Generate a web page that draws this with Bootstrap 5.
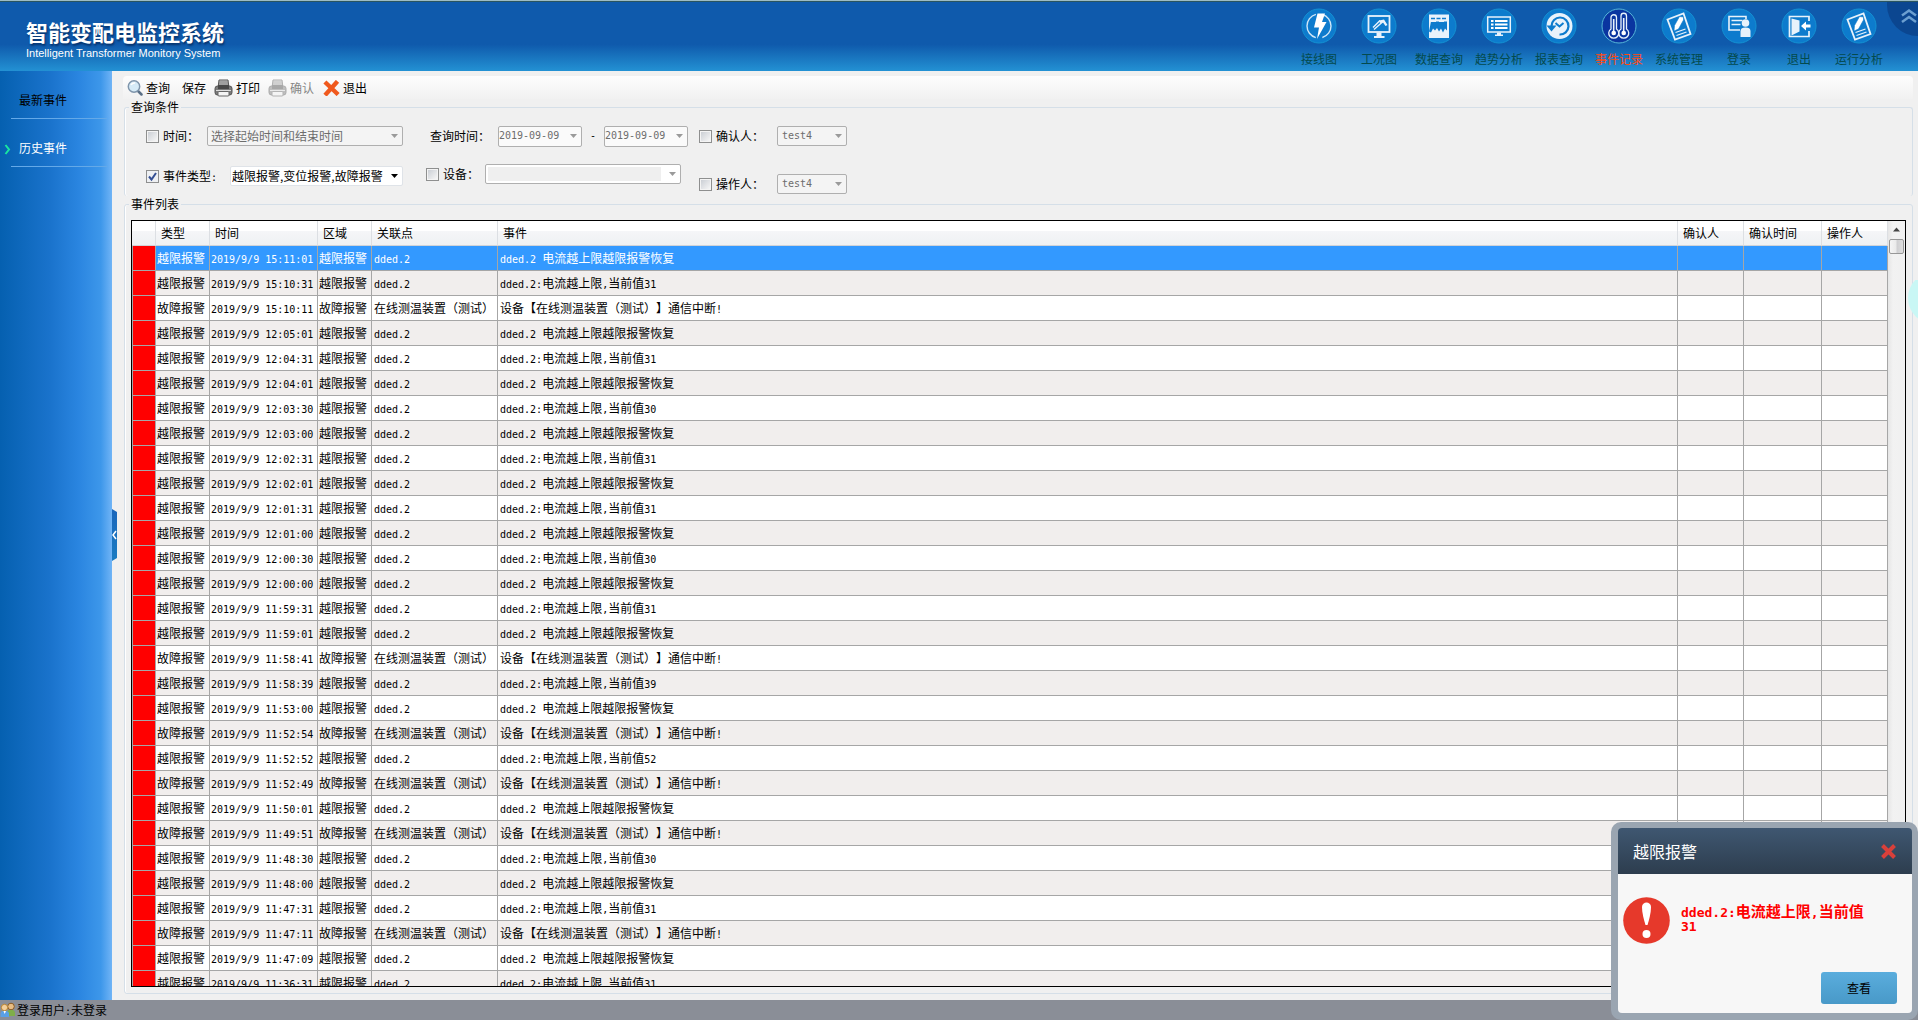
<!DOCTYPE html>
<html lang="zh-CN">
<head>
<meta charset="utf-8">
<meta name="viewport" content="width=device-width, initial-scale=1">
<title>智能变配电监控系统</title>
<link href="https://cdn.jsdelivr.net/npm/bootstrap@5.3.0/dist/css/bootstrap.min.css" rel="stylesheet">
<style>
  body { font-family: "Noto Sans CJK SC", sans-serif; font-size: 12px; line-height: 16px; color: #000; background: #f0f0f0; text-spacing-trim: space-all; font-feature-settings: "chws" 0, "halt" 0; }
  .asc { font-family: "DejaVu Sans Mono", monospace; font-size: 10px; line-height: 10px; white-space: pre; }

  /* header */
  .app-head { height: 71px; border-top: 1px solid #9dbcc4; background: linear-gradient(#0f5aac 0, #0f5aac 62%, #2391d3 100%); box-shadow: inset 0 1px 0 #2a5560; }
  .brand-title { font-size: 22px; line-height: 28px; font-weight: 700; color: #fff; text-shadow: 1px 2px 2px #06336c; }
  .brand-sub { font-family: "Liberation Sans", sans-serif; font-size: 11px; line-height: 16px; color: #fff; }
  .brand-box { padding: 16px 0 0 26px; }
  .head-nav { padding: 7px 29px 0 0; }
  .head-nav a { width: 60px; color: #044a4d; text-decoration: none; white-space: nowrap; }
  .head-nav a.on { color: #ff4a10; }
  .head-nav svg { width: 36px; height: 36px; margin-bottom: 7px; }
  .fold-btn { top: 1px; right: 0; width: 31px; height: 34px; border: 0; padding: 0; background: #0b4690; border-radius: 0 0 0 31px; }

  /* side bar */
  .side { width: 112px; background: linear-gradient(90deg, #0560b0 0, #1a73cc 45%, #2a85e0 70%, #3d97ea 90%, #70b4f6 100%); padding: 6px 5px 0 11px; }
  .side a { height: 48px; padding: 10px 0 0 8px; color: #000; text-decoration: none; border-bottom: 1px solid #64a9e8; }
  .side a:first-child { height: 42px; padding-top: 4px; }
  .side a.on { color: #fff; }
  .side a.on svg { left: -7px; top: 25px; }
  .side-tab { left: 112px; top: 438px; width: 5px; height: 52px; border: 0; padding: 0; background: linear-gradient(#1a66bb, #1b7cc2); clip-path: polygon(0 0, 100% 3px, 100% 49px, 0 100%); }

  /* tool bar */
  .work { padding: 5px 5px 6px 11px; }
  .tool-bar { height: 23px; background: linear-gradient(#fdfdfd, #f1f1f1); border-radius: 4px 4px 0 0; padding: 0 0 0 4px; }
  .tool-bar button { border: 0; background: none; padding: 0; color: #000; display: flex; align-items: center; gap: 3px; }
  .tool-bar button:disabled { color: #868686; }

  /* group boxes */
  .grp { border: 1px solid #d5dfe8; border-radius: 3px; margin-left: 1px; box-shadow: inset 1px 0 0 #fff; min-width: 0; }
  .grp legend { float: none; width: auto; margin: 0 0 0 -2px; padding: 0 2px; font-size: 12px; line-height: 16px; }
  .cond { height: 97px; border-bottom: 0; padding: 0 0 0 6px; }
  .blk-a { width: 257px; margin: 11px 23px 0 15px; }
  .blk-b { width: 262px; margin: 11px 11px 0 0; }
  .blk-c { width: 148px; margin-top: 11px; }
  .fline { height: 20px; display: flex; align-items: center; white-space: nowrap; }
  .fline + .fline { margin-top: 20px; }
  .blk-b .fline + .fline { margin-top: 18px; }
  .blk-c .fline + .fline { margin-top: 28px; }
  .dev-label { width: 42px; }
  .chk { appearance: none; width: 13px; height: 13px; margin: 0 4px 0 0; border: 1px solid #8e8f8f; background: linear-gradient(135deg, #cbcfd5, #f6f6f6) content-box, #f4f4f4; padding: 1px; flex: none; }
  .chk:checked { background: url("data:image/svg+xml,%3Csvg xmlns='http://www.w3.org/2000/svg' viewBox='0 0 11 11'%3E%3Cpath d='M2 5.5 4.5 8.5 9 2' fill='none' stroke='%23344f93' stroke-width='2'/%3E%3C/svg%3E"), #eef0f3; }
  .sel { height: 20px; min-height: 0; padding: 0 16px 0 3px; font-family: "Noto Sans CJK SC", sans-serif; font-size: 12px; line-height: 16px; color: #000; border: 1px solid #dfe3e8; border-radius: 2px; background: #fff url("data:image/svg+xml,%3Csvg xmlns='http://www.w3.org/2000/svg' width='8' height='4'%3E%3Cpath d='M0 0h8L4 4z' fill='%23000'/%3E%3C/svg%3E") no-repeat right 4px center; background-size: 7px 4px; }
  .sel:disabled { color: #6d6d6d; border-color: #afafaf; opacity: 1; background-color: #f4f4f4; background-image: url("data:image/svg+xml,%3Csvg xmlns='http://www.w3.org/2000/svg' width='8' height='4'%3E%3Cpath d='M0 0h8L4 4z' fill='%239a9a9a'/%3E%3C/svg%3E"); }
  .sel.date-sel { width: 84px; height: 21px; padding-left: 0; background-color: #fafafa; }
  .sel.mono { font-family: "DejaVu Sans Mono", monospace; font-size: 10px; }
  .sel.w-time { width: 196px; }
  .sel.w-type { width: 173px; padding-left: 1px; padding-right: 18px; }
  .sel.w-dev { width: 196px; }
  .sel.w-dev:disabled { background: url("data:image/svg+xml,%3Csvg xmlns='http://www.w3.org/2000/svg' width='8' height='4'%3E%3Cpath d='M0 0h8L4 4z' fill='%239a9a9a'/%3E%3C/svg%3E") no-repeat right 4px center / 7px 4px, linear-gradient(#efefef, #efefef) no-repeat 2px 2px / 173px 14px, #fff; }
  .sel.w-user { width: 70px; padding-left: 4px; }

  /* event grid */
  .list-grp { padding: 0 6px 6px 6px; }
  .grid-box { margin-top: 8px; border: 1px solid #000; background: #f0f0f0; }
  .evt { table-layout: fixed; width: 100%; border-collapse: separate; border-spacing: 0; margin: 0; }
  .evt th { height: 25px; padding: 0 0 0 5px; font-weight: 400; border-right: 1px solid #dcdfe3; border-bottom: 1px solid #d0d3d8; background: linear-gradient(#fff 0, #fff 40%, #f5f6f8 41%, #eff1f3 100%); }
  .evt td { height: 25px; padding: 0 0 1px 1px; line-height: 14px; border-right: 1px solid #a6a6a6; border-bottom: 1px solid #a6a6a6; white-space: nowrap; overflow: hidden; background: #fff; }
  .evt td:nth-child(n+5) { padding-left: 2px; }
  .evt tr:nth-child(even) td { background: #f1eeed; }
  .evt tbody tr td.flag { background: red; border-left: 1px solid #a6a6a6; }
  .evt tbody tr.picked td:not(.flag) { background: #3399ff; color: #fff; }
  .sbar { width: 17px; background: linear-gradient(90deg, #e6e6e6, #f2f2f2 30%, #f0f0f0); padding: 6px 1px 0 1px; }
  .sbar .thumb { height: 15px; margin-top: 7px; border: 1px solid #979797; border-radius: 2px; background: linear-gradient(90deg, #f5f5f5 0, #eaeaea 45%, #cfcfd1 55%, #dedede 100%); }

  .bubble { right: 0; top: 280px; width: 10px; height: 40px; }

  /* status bar */
  .status { height: 20px; background: #8a8e97; }

  /* alarm popup */
  .alarm { right: 0; bottom: 0; width: 307px; border: 6px solid #9aa5b1; border-left-width: 7px; border-bottom-width: 7px; border-radius: 10px; background: #9aa5b1; z-index: 5; }
  .alarm-head { height: 46px; border-radius: 4px 4px 0 0; background: linear-gradient(#3f5771, #2d3d4e); color: #fff; font-size: 16px; line-height: 20px; padding: 0 15px 0 15px; }
  .alarm-head button, .side-tab, .fold-btn { line-height: 0; }
  .alarm-head button { border: 0; background: none; padding: 0; }
  .alarm-main { background: #f7f7f7; border-radius: 0 0 4px 4px; height: 139px; padding: 23px 15px 9px 5px; }
  .alarm-text { color: red; font-size: 15px; line-height: 14px; font-weight: 700; padding: 7px 0 0 11px; }
  .alarm-text .asc { font-size: 13px; }
  .view-btn { width: 76px; height: 32px; border: 0; border-radius: 3px; background: linear-gradient(#5aaddd, #4899c8); font-size: 12px; line-height: 16px; color: #000; }
</style>
</head>
<body class="vh-100 overflow-hidden d-flex flex-column position-relative">

<svg width="0" height="0" class="position-absolute" aria-hidden="true">
  <defs>
    <g id="note">
      <path d="M6.500 11.500 22.500 5.500 29.500 26 14 31.500z" fill="none" stroke="#e8f2fb" stroke-width="1.800"/>
      <path d="M14.500 24.500l10-3.500M15.500 27.500l10-3.500" stroke="#e8f2fb" stroke-width="1.300"/>
      <path d="M18.500 8.500l4 .5 0 3-5 9-4.500 2 .5-5.500z" fill="#fff" stroke="#0d7bcd" stroke-width=".600"/>
    </g>
    <g id="printer">
      <path d="M5 1h9l1 8H4z" fill="#c9c9c9" stroke="#555" stroke-width="1"/>
      <path d="M5 3h9M5 5h9" stroke="#777"/>
      <rect x="1" y="7" width="17" height="9" rx="2.500" fill="#7b7b7b" stroke="#555"/>
      <path d="M4 6h11v4H4z" fill="#484848"/>
      <path d="M2 11.500h15" stroke="#ddd"/>
      <rect x="4" y="12.500" width="11" height="4.500" rx="1" fill="#f4f4f4" stroke="#666"/>
    </g>
  </defs>
</svg>

<header class="app-head d-flex justify-content-between flex-shrink-0 position-relative">
  <div class="brand-box">
    <div class="brand-title">智能变配电监控系统</div>
    <div class="brand-sub">Intelligent Transformer Monitory System</div>
  </div>
  <nav class="head-nav d-flex align-items-start">
    <a href="#" class="d-flex flex-column align-items-center"><svg viewBox="0 0 36 36"><circle cx="18" cy="18" r="17" fill="#0d7bcd" stroke="#1391d2"/><circle cx="18" cy="18" r="12" fill="none" stroke="#cfe6f7" stroke-width="1.400" stroke-dasharray="31 6.700" stroke-dashoffset="-22"/><path d="M16.500 5.500h7.500l-3 8.500h4.500L16 31l2-11.500h-5z" fill="#fff"/></svg>接线图</a>
    <a href="#" class="d-flex flex-column align-items-center"><svg viewBox="0 0 36 36"><circle cx="18" cy="18" r="17" fill="#0d7bcd" stroke="#1391d2"/><rect x="7.500" y="8" width="21" height="16" fill="none" stroke="#e8f2fb" stroke-width="1.800"/><path d="M15.500 24.500h5v3.500h3v2H13v-2h2.500z" fill="#e8f2fb"/><path d="M13 21.500l9-8M12 19.500l7-7" stroke="#e8f2fb" stroke-width="1.500"/><path d="M18 12.500l5-1 3.500 5.500-2 1-2.500-3.500-3 .5z" fill="#e8f2fb"/></svg>工况图</a>
    <a href="#" class="d-flex flex-column align-items-center"><svg viewBox="0 0 36 36"><circle cx="18" cy="18" r="17" fill="#0d7bcd" stroke="#1391d2"/><path d="M8 6.500h20v23.500H8z" fill="#e8f2fb"/><path d="M10 13.500h16v9l-2-2-2 4-2-4-2 3-2-3.500-2 2.500-2-2-2 4-2-1z" fill="#0d7bcd"/><path d="M10 10.500h16" stroke="#0d7bcd" stroke-dasharray="4 1.500" stroke-width="1.500"/><path d="M10 13.500h16" stroke="#e8f2fb" stroke-dasharray="5 3"/></svg>数据查询</a>
    <a href="#" class="d-flex flex-column align-items-center"><svg viewBox="0 0 36 36"><circle cx="18" cy="18" r="17" fill="#0d7bcd" stroke="#1391d2"/><rect x="6.700" y="9" width="22.600" height="15" fill="none" stroke="#e8f2fb" stroke-width="1.500"/><path d="M16 24.500h4v2h2v1.500h-8v-1.500h2z" fill="#e8f2fb"/><path d="M10 13h2.500M14 13h12.500M10 16.500h2.500M14 16.500h12.500M10 20h2.500M14 20h12.500" stroke="#fff" stroke-width="1.800"/></svg>趋势分析</a>
    <a href="#" class="d-flex flex-column align-items-center"><svg viewBox="0 0 36 36"><circle cx="18" cy="18" r="17" fill="#0d7bcd" stroke="#1391d2"/><circle cx="18.500" cy="18" r="13" fill="#e8f2fb"/><path d="M10.500 18a8.500 8.500 0 1 1 8 8.500" fill="none" stroke="#0d7bcd" stroke-width="2.200"/><path d="M5.500 17.500h10l-5 6z" fill="#0d7bcd"/><path d="M14.500 15l4 3.500 4-3.500" fill="none" stroke="#0d7bcd" stroke-width="2"/></svg>报表查询</a>
    <a href="#" class="on d-flex flex-column align-items-center"><svg viewBox="0 0 36 36"><circle cx="18" cy="18" r="17" fill="#0a35a0" stroke="#55b7d8"/><g fill="none" stroke="#e8f2fb" stroke-width="1.300"><path d="M10 21V9.500a2.700 2.700 0 0 1 5.500 0V21a5 5 0 1 1-5.500 0z"/><path d="M20 21V8a2.700 2.700 0 0 1 5.500 0v13a5 5 0 1 1-5.500 0z"/><path d="M12.700 11v12M22.700 10v13" stroke-width="1.600"/></g><circle cx="12.700" cy="25" r="2.300" fill="#fff"/><circle cx="22.700" cy="25" r="2.300" fill="#fff"/></svg>事件记录</a>
    <a href="#" class="d-flex flex-column align-items-center"><svg viewBox="0 0 36 36"><circle cx="18" cy="18" r="17" fill="#0d7bcd" stroke="#1391d2"/><use href="#note"/></svg>系统管理</a>
    <a href="#" class="d-flex flex-column align-items-center"><svg viewBox="0 0 36 36"><circle cx="18" cy="18" r="17" fill="#0d7bcd" stroke="#1391d2"/><path d="M25 11V8.500H8V22h11" fill="none" stroke="#e8f2fb" stroke-width="1.600"/><path d="M10.500 12.500h11M10.500 16.500h9" stroke="#e8f2fb" stroke-width="1.500"/><circle cx="24.500" cy="15" r="3.800" fill="#e8f2fb"/><path d="M19.500 29v-6c0-2.500 2-3.500 5-3.500s5 1 5 3.500v6z" fill="#e8f2fb"/></svg>登录</a>
    <a href="#" class="d-flex flex-column align-items-center"><svg viewBox="0 0 36 36"><circle cx="18" cy="18" r="17" fill="#0d7bcd" stroke="#1391d2"/><path d="M28 13V8.500H8.500v20H28V23" fill="none" stroke="#e8f2fb" stroke-width="1.700"/><path d="M10.500 10.500l8 2v11l-8 4z" fill="#e8f2fb"/><path d="M20 18l5-4.500v3h4.500v3H25v3z" fill="#fff"/></svg>退出</a>
    <a href="#" class="d-flex flex-column align-items-center"><svg viewBox="0 0 36 36"><circle cx="18" cy="18" r="17" fill="#0d7bcd" stroke="#1391d2"/><use href="#note"/></svg>运行分析</a>
  </nav>
  <button class="fold-btn position-absolute" aria-label="收起"><svg width="31" height="34" viewBox="0 0 31 34"><path d="M15 13.500l7-5 7 5M15 20l7-5 7 5" fill="none" stroke="#6c9fd0" stroke-width="2.500"/></svg></button>
</header>

<div class="d-flex flex-grow-1 position-relative" style="min-height:0">
  <aside class="side flex-shrink-0">
    <a href="#" class="d-flex align-items-center">最新事件</a>
    <a href="#" class="on d-flex align-items-center position-relative"><svg class="position-absolute" width="7" height="11" viewBox="0 0 7 11"><path d="M1.500 1l3.500 4.500L1.500 10" fill="none" stroke="#19e6a0" stroke-width="2"/></svg>历史事件</a>
  </aside>
  <button class="side-tab position-absolute" aria-label="折叠侧栏"><svg width="5" height="10" viewBox="0 0 5 10"><path d="M4 1L1 5l3 4" fill="none" stroke="#fff" stroke-width="1.500"/></svg></button>

  <main class="work flex-grow-1 d-flex flex-column" style="min-width:0">
    <div class="tool-bar d-flex align-items-center flex-shrink-0">
      <button><svg width="16" height="17" viewBox="0 0 16 17"><path d="M10.500 11.500l4 4" stroke="#5a6f86" stroke-width="2.500" stroke-linecap="round"/><circle cx="7" cy="7.500" r="5.700" fill="#d6ebf7" stroke="#7f95ab" stroke-width="1.500"/><path d="M4 6a4 4 0 0 1 4-2" fill="none" stroke="#fff" stroke-width="1.500"/></svg>查询</button>
      <button class="ms-2 px-1">保存</button>
      <button class="ms-1"><svg width="19" height="18" viewBox="0 0 19 18"><use href="#printer"/></svg>打印</button>
      <button class="ms-2" disabled><svg width="19" height="18" viewBox="0 0 19 18" opacity=".45"><use href="#printer"/></svg>确认</button>
      <button class="ms-2"><svg width="18" height="16" viewBox="0 0 18 16"><path d="M4.500 3.500l10 9.500M14 3L4.500 13.500" stroke="#f0591d" stroke-width="4.400" stroke-linecap="square"/></svg>退出</button>
    </div>

    <fieldset class="grp cond flex-shrink-0">
      <legend>查询条件</legend>
      <div class="d-flex">
        <div class="blk-a">
          <div class="fline"><input class="chk" type="checkbox" id="c1"><label for="c1">时间：</label><select class="form-select sel w-time ms-auto" aria-label="时间" disabled><option>选择起始时间和结束时间</option></select></div>
          <div class="fline"><input class="chk" type="checkbox" id="c2" checked><label for="c2">事件类型<span class="asc">:</span></label><select class="form-select sel w-type ms-auto" aria-label="事件类型"><option>越限报警,变位报警,故障报警</option></select></div>
        </div>
        <div class="blk-b">
          <div class="fline ps-1"><label for="d1">查询时间：</label><select class="form-select sel date-sel mono ms-auto" id="d1" disabled><option>2019-09-09</option></select><span class="asc px-2">-</span><select class="form-select sel date-sel mono" aria-label="结束时间" disabled><option>2019-09-09</option></select></div>
          <div class="fline"><input class="chk" type="checkbox" id="c3"><label for="c3" class="dev-label">设备：</label><select class="form-select sel w-dev" aria-label="设备" disabled><option></option></select></div>
        </div>
        <div class="blk-c">
          <div class="fline"><input class="chk" type="checkbox" id="c4"><label for="c4">确认人：</label><select class="form-select sel mono w-user ms-auto" aria-label="确认人" disabled><option>test4</option></select></div>
          <div class="fline"><input class="chk" type="checkbox" id="c5"><label for="c5">操作人：</label><select class="form-select sel mono w-user ms-auto" aria-label="操作人" disabled><option>test4</option></select></div>
        </div>
      </div>
    </fieldset>

    <fieldset class="grp list-grp flex-grow-1 d-flex flex-column" style="min-height:0">
      <legend>事件列表</legend>
      <div class="grid-box d-flex flex-grow-1 overflow-hidden" style="min-height:0">
        <div class="flex-grow-1 overflow-hidden">
          <table class="evt">
            <colgroup><col style="width:24px"><col style="width:54px"><col style="width:108px"><col style="width:54px"><col style="width:126px"><col><col style="width:66px"><col style="width:78px"><col style="width:66px"></colgroup>
            <thead><tr><th></th><th>类型</th><th>时间</th><th>区域</th><th>关联点</th><th>事件</th><th>确认人</th><th>确认时间</th><th>操作人</th></tr></thead>
            <tbody id="rows"></tbody>
          </table>
        </div>
        <div class="sbar flex-shrink-0"><svg class="d-block mx-auto" width="7" height="5" viewBox="0 0 7 5"><path d="M0 4.500L3.500.500 7 4.500z" fill="#444"/></svg><div class="thumb"></div></div>
      </div>
    </fieldset>
  </main>
</div>

<svg class="bubble position-absolute" viewBox="0 0 10 40"><circle cx="26" cy="18" r="26" fill="#c9f7f5"/></svg>

<footer class="status d-flex align-items-center flex-shrink-0">
  <svg width="17" height="16" viewBox="0 0 17 16"><circle cx="11" cy="4.500" r="3.300" fill="#e8bd84" stroke="#8a5a22"/><path d="M7 14V10.500c0-2 1.500-2.500 4-2.500s4 .5 4 3V14z" fill="#7fae4a"/><circle cx="4.500" cy="5.500" r="3.200" fill="#f3cf9a" stroke="#b98532"/><path d="M.500 15v-3.500C.500 9.500 2 9 4.500 9s4.500.5 4.500 2.500V15z" fill="#5aa0e6"/><path d="M3.500 9l1.200 3L6 9z" fill="#fff"/></svg>
  <span>登录用户<span class="asc">:</span>未登录</span>
</footer>

<section class="alarm position-absolute" role="alertdialog" aria-label="越限报警">
  <div class="alarm-head d-flex align-items-center justify-content-between">
    <span>越限报警</span>
    <button aria-label="关闭"><svg width="17" height="17" viewBox="0 0 17 17"><path d="M2.500 2.500l12 12M14.500 2.500l-12 12" stroke="#d9403a" stroke-width="4"/></svg></button>
  </div>
  <div class="alarm-main d-flex flex-column justify-content-between">
    <div class="d-flex">
      <svg class="flex-shrink-0" width="47" height="47" viewBox="0 0 47 47"><circle cx="23.500" cy="23.500" r="23.300" fill="#e6392b"/><path d="M19 10c0-6 9-6 9 0 0 6-2 13-3.500 18h-2C21 23 19 16 19 10z" fill="#fff"/><circle cx="23.500" cy="37" r="4" fill="#fff"/></svg>
      <div class="alarm-text"><span class="asc">dded.2:</span>电流越上限<span class="asc">,</span>当前值<br><span class="asc">31</span></div>
    </div>
    <button class="view-btn align-self-end">查看</button>
  </div>
</section>

<script src="https://cdn.jsdelivr.net/npm/bootstrap@5.3.0/dist/js/bootstrap.bundle.min.js"></script>
<script>
  // Each entry: time, then R = recovered, F = device fault, or the measured value.
  const log = [
    ['15:11:01','R'],['15:10:31',31],['15:10:11','F'],['12:05:01','R'],['12:04:31',31],['12:04:01','R'],
    ['12:03:30',30],['12:03:00','R'],['12:02:31',31],['12:02:01','R'],['12:01:31',31],['12:01:00','R'],
    ['12:00:30',30],['12:00:00','R'],['11:59:31',31],['11:59:01','R'],['11:58:41','F'],['11:58:39',39],
    ['11:53:00','R'],['11:52:54','F'],['11:52:52',52],['11:52:49','F'],['11:50:01','R'],['11:49:51','F'],
    ['11:48:30',30],['11:48:00','R'],['11:47:31',31],['11:47:11','F'],['11:47:09','R'],['11:36:31',31]
  ];
  const half = s => s.replace(/[ -~]+/g, m => '<span class="asc">' + m + '</span>');
  document.getElementById('rows').innerHTML = log.map(([t, k], i) => {
    const type = k === 'F' ? '故障报警' : '越限报警';
    const point = k === 'F' ? '在线测温装置（测试）' : 'dded.2';
    const text = k === 'F' ? '设备【在线测温装置（测试）】通信中断!'
      : k === 'R' ? 'dded.2 电流越上限越限报警恢复' : 'dded.2:电流越上限,当前值' + k;
    const cells = [type, '2019/9/9 ' + t, type, point, text, '', '', ''];
    return `<tr${i ? '' : ' class="picked"'}><td class="flag"></td>` + cells.map(c => `<td>${half(c)}</td>`).join('') + '</tr>';
  }).join('');
</script>
</body>
</html>
